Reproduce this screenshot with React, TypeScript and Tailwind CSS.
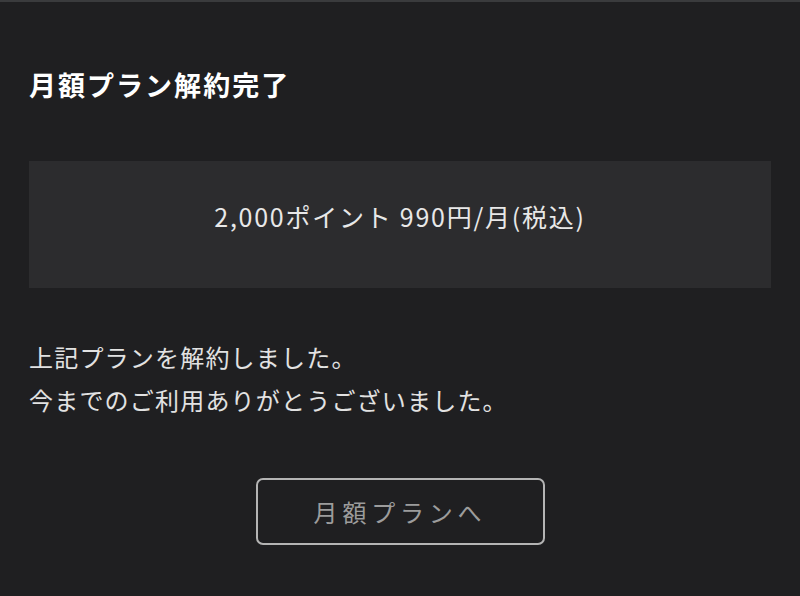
import React from 'react';

const App: React.FC = () => {
  return (
    <div
      className="w-[800px] h-[596px] bg-[#1f1f21] border-t-2 border-[#3a3b3d] flex flex-col px-[29px]"
      style={{ fontFamily: '"Noto Sans CJK JP", "Noto Sans", sans-serif' }}
    >
      {/* Title */}
      <h1 className="mt-[65px] text-[27px] leading-[36px] font-bold tracking-[0.075em] text-white">
        月額プラン解約完了
      </h1>

      {/* Plan box */}
      <div className="mt-[58px] h-[127px] bg-[#2c2c2e] flex items-center justify-center pb-[16px]">
        <span className="text-[25px] tracking-[0.07em] text-[#e8e8e8]">2,000ポイント 990円/月(税込)</span>
      </div>

      {/* Message */}
      <p className="mt-[47px] text-[24px] leading-[43px] tracking-[0.05em] text-[#e2e2e2]">
        上記プランを解約しました。
        <br />
        今までのご利用ありがとうございました。
      </p>

      {/* Button */}
      <div className="mt-[57px] flex justify-center">
        <button className="w-[289px] h-[67px] border-2 border-[#b4b4b4] rounded-[7px] text-[24px] tracking-[0.2em] text-[#9c9c9c] flex items-center justify-center">
          月額プランへ
        </button>
      </div>
    </div>
  );
};

export default App;
